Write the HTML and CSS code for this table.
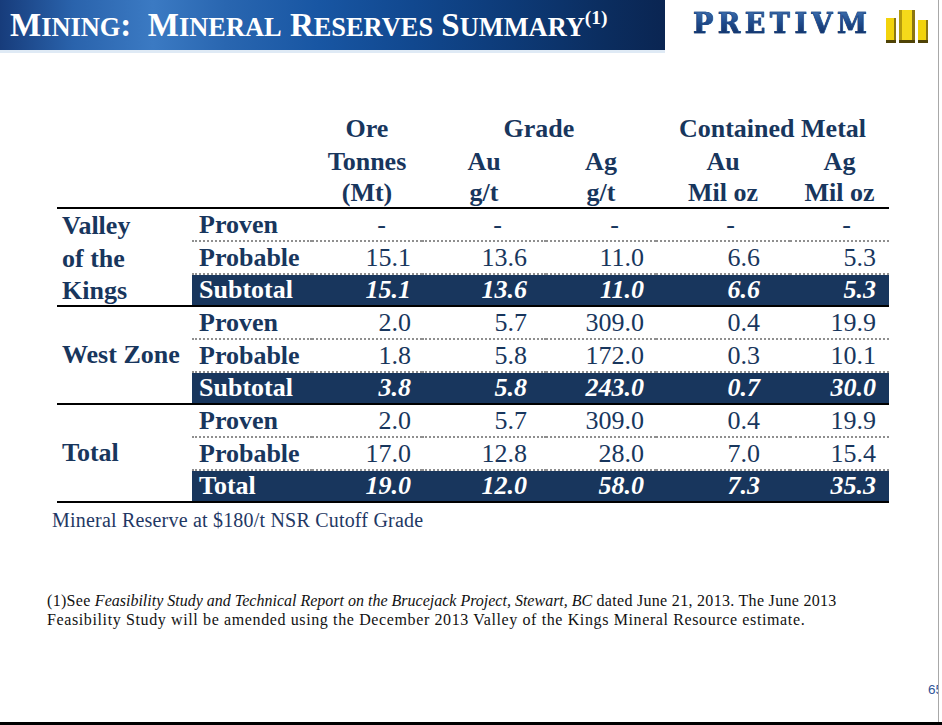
FILE: index.html
```html
<!DOCTYPE html>
<html lang="en">
<head>
<meta charset="utf-8">
<title>Mining: Mineral Reserves Summary</title>
<link rel="stylesheet" href="styles.css">
</head>
<body>
<div class="page">
  <header class="top">
    <div class="banner">
      <h1 class="title">M<span class="sc">INING</span>:&nbsp; M<span class="sc">INERAL</span> R<span class="sc">ESERVES</span> S<span class="sc">UMMARY</span><sup>(1)</sup></h1>
    </div>
    <div class="logo">
      <span class="logo-word">PRETIVM</span>
      <svg class="bars" width="45" height="35" viewBox="0 0 45 35" aria-hidden="true">
        <rect x="1" y="9" width="10" height="25" fill="#f2d30c"/>
        <rect x="9" y="9" width="2" height="25" fill="#8c7612"/>
        <rect x="1" y="31" width="10" height="3" fill="#4f4306"/>
        <rect x="14" y="1" width="16" height="33" fill="#f5da1a"/>
        <rect x="14" y="1" width="3" height="33" fill="#b39a0e"/>
        <rect x="27" y="1" width="3" height="33" fill="#8c7612"/>
        <rect x="14" y="31" width="16" height="3" fill="#4f4306"/>
        <rect x="33" y="11" width="10" height="23" fill="#f2d30c"/>
        <rect x="41" y="11" width="2" height="23" fill="#8c7612"/>
        <rect x="33" y="31" width="10" height="3" fill="#4f4306"/>
      </svg>
    </div>
  </header>

  <main class="content">
    <div class="reserves">
      <div class="hd-blank"></div>
      <div class="hd">Ore</div>
      <div class="hd span2">Grade</div>
      <div class="hd span2">Contained Metal</div>
      <div class="hd">Tonnes</div>
      <div class="hd">Au</div>
      <div class="hd">Ag</div>
      <div class="hd">Au</div>
      <div class="hd">Ag</div>
      <div class="hd last">(Mt)</div>
      <div class="hd last">g/t</div>
      <div class="hd last">g/t</div>
      <div class="hd last">Mil oz</div>
      <div class="hd last">Mil oz</div>

      <div class="zone stacked">Valley<br>of the<br>Kings</div>
      <div class="row"><span class="cat">Proven</span><span class="nil"><i>-</i></span><span class="nil"><i>-</i></span><span class="nil"><i>-</i></span><span class="nil"><i>-</i></span><span class="nil"><i>-</i></span></div>
      <div class="row"><span class="cat">Probable</span><span>15.1</span><span>13.6</span><span>11.0</span><span>6.6</span><span>5.3</span></div>
      <div class="row sub"><span class="cat">Subtotal</span><span>15.1</span><span>13.6</span><span>11.0</span><span>6.6</span><span>5.3</span></div>

      <div class="zone">West Zone</div>
      <div class="row"><span class="cat">Proven</span><span>2.0</span><span>5.7</span><span>309.0</span><span>0.4</span><span>19.9</span></div>
      <div class="row"><span class="cat">Probable</span><span>1.8</span><span>5.8</span><span>172.0</span><span>0.3</span><span>10.1</span></div>
      <div class="row sub"><span class="cat">Subtotal</span><span>3.8</span><span>5.8</span><span>243.0</span><span>0.7</span><span>30.0</span></div>

      <div class="zone">Total</div>
      <div class="row"><span class="cat">Proven</span><span>2.0</span><span>5.7</span><span>309.0</span><span>0.4</span><span>19.9</span></div>
      <div class="row"><span class="cat">Probable</span><span>17.0</span><span>12.8</span><span>28.0</span><span>7.0</span><span>15.4</span></div>
      <div class="row sub"><span class="cat">Total</span><span>19.0</span><span>12.0</span><span>58.0</span><span>7.3</span><span>35.3</span></div>
    </div>

    <p class="note">Mineral Reserve at $180/t NSR Cutoff Grade</p>

    <p class="footnote">(1)See <em>Feasibility Study and Technical Report on the Brucejack Project, Stewart, BC</em> dated June 21, 2013. The June 2013<br><span class="l2">Feasibility Study will be amended using the December 2013 Valley of the Kings Mineral Resource estimate.</span></p>
  </main>

  <footer class="pagenum">65</footer>
</div>
<div class="bottom-bar"></div>
</body>
</html>
```

FILE: styles.css
```css
* { box-sizing: border-box; }

html, body {
  margin: 0;
  padding: 0;
  background: #fff;
}

body {
  width: 942px;
  height: 725px;
  overflow: hidden;
  font-family: "Liberation Serif", "Times New Roman", serif;
}

.page {
  width: 939px;
  height: 722px;
  border-right: 1px solid #a8a8a8;
  overflow: hidden;
  display: flex;
  flex-direction: column;
}

.bottom-bar {
  height: 3px;
  background: #000;
}

/* ---------- header ---------- */
.top {
  flex: none;
  display: flex;
  height: 53px;
}

.banner {
  width: 665px;
  height: 53px;
  border-bottom: 3px solid #dfeaf5;
  background: linear-gradient(90deg,
    #173c7b 0%,
    #2a63ac 11%,
    #3b7ac3 23%,
    #2966b0 34%,
    #1856a3 48%,
    #11488f 62%,
    #0d3a77 77%,
    #0b2d5f 91%,
    #0a2552 100%);
}

.title {
  margin: 0;
  padding-left: 10px;
  font-weight: bold;
  font-size: 33px;
  line-height: 50px;
  color: #fff;
  white-space: nowrap;
}

.title .sc {
  font-size: 26.4px;
}

.title sup {
  font-size: 19.5px;
  line-height: 0;
  vertical-align: 12px;
}

.logo {
  flex: 1;
  display: flex;
  align-items: flex-start;
  padding: 9px 0 0 28px;
  gap: 14px;
}

.logo-word {
  margin-top: 1px;
  font-family: "DejaVu Serif", serif;
  font-weight: bold;
  font-size: 27px;
  line-height: 27px;
  letter-spacing: 4.5px;
  background: linear-gradient(180deg, #3f71b0 0%, #1f4d8e 45%, #0e2c5f 100%);
  -webkit-background-clip: text;
  background-clip: text;
  color: transparent;
  -webkit-text-stroke: 0.6px #1b4482;
}

.bars {
  display: block;
}

/* ---------- table ---------- */
.content {
  padding-left: 47px;
}

.reserves {
  margin: 59px 0 0 10px;
  width: 832px;
  display: grid;
  grid-template-columns: 135px 120px 110px 124px 110px 134px 99px;
  grid-template-rows: 33px 33px 31px repeat(3, 33px 33px 32px);
  font-size: 26px;
  color: #18365d;
}

.hd-blank {
  grid-column: 1 / span 2;
  grid-row: 1 / span 3;
  border-bottom: 2px solid #000;
}

.hd {
  display: flex;
  align-items: center;
  justify-content: center;
  font-weight: bold;
  white-space: nowrap;
}

.hd.span2 { grid-column: span 2; }
.hd.last { border-bottom: 2px solid #000; }

.zone {
  grid-column: 1;
  grid-row: span 3;
  display: flex;
  align-items: center;
  padding-left: 5px;
  font-weight: bold;
  white-space: nowrap;
  border-bottom: 2px solid #000;
}

.zone.stacked {
  display: block;
  padding-top: 1px;
  line-height: 32.5px;
}

.row { display: contents; }

.row > * {
  display: flex;
  align-items: center;
  justify-content: flex-end;
  border-bottom: 2px dotted #8f8f8f;
  white-space: nowrap;
}

.row > .cat {
  grid-column: 2;
  justify-content: flex-start;
  padding-left: 7px;
  font-weight: bold;
}

.row > :nth-child(2) { padding-right: 11px; }
.row > :nth-child(3) { padding-right: 19px; }
.row > :nth-child(4) { padding-right: 12px; }
.row > :nth-child(5) { padding-right: 30px; }
.row > :nth-child(6) { padding-right: 13px; }

.nil i {
  font-style: normal;
  margin-right: 25px;
}

.row.sub > * {
  background: #18365d;
  color: #fff;
  font-weight: bold;
  font-style: italic;
  border-bottom: 2px solid #000;
}

.row.sub > .cat { font-style: normal; }

/* ---------- notes ---------- */
.note {
  margin: 6px 0 0 5px;
  font-size: 20px;
  line-height: 23px;
  letter-spacing: 0.2px;
  color: #1f3864;
}

.footnote {
  margin: 59px 0 0;
  font-size: 16px;
  line-height: 19px;
  letter-spacing: 0.3px;
  color: #111;
  white-space: nowrap;
}

.footnote em {
  letter-spacing: 0;
}

.footnote .l2 {
  letter-spacing: 0.62px;
}

.pagenum {
  margin-top: auto;
  margin-right: -5px;
  padding-bottom: 25px;
  text-align: right;
  font-family: "Liberation Sans", Arial, sans-serif;
  font-size: 13.5px;
  line-height: 15px;
  color: #2f5597;
}
```
